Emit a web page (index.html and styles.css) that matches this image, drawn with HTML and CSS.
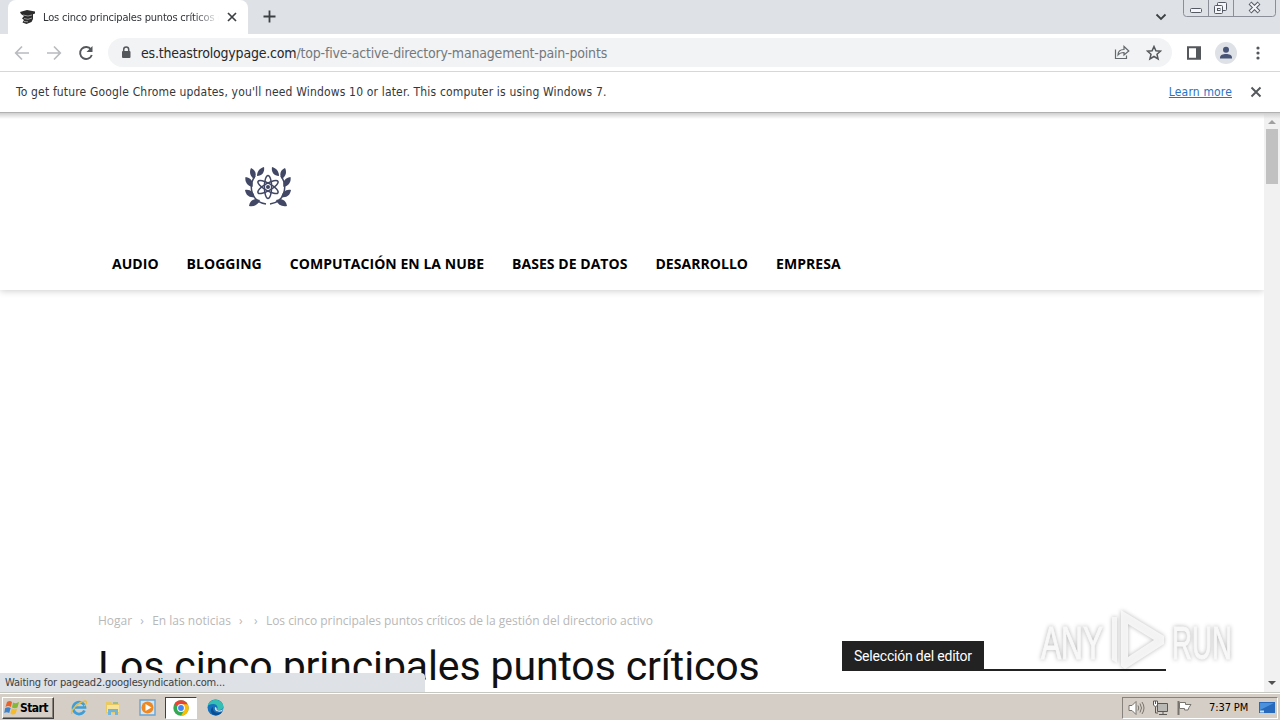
FILE: index.html
```html
<!DOCTYPE html>
<html lang="es">
<head>
    <meta charset="UTF-8">
    <title>Los cinco principales puntos críticos de la gestión del directorio activo</title>
    <link rel="stylesheet" href="styles.css">
</head>
<body>
    <div class="desktop">
        <!-- Tab strip -->
        <div class="tab-strip">
            <div class="tab">
                <svg class="favicon" width="16" height="16" viewBox="0 0 16 16"><path d="M0 3 7 1l8 1.500v2l-2 .8V10l-1.500 3-5 2-4-1.500L4 11 2 9.500 4 7 1 5z" fill="#2c2c2c"/><path d="m3 6 5 1 4-1M4 9.500l4 .8 4-1.300M4 12.500l4 .3" stroke="#999" fill="none"/></svg>
                <span class="tab-title">Los cinco principales puntos críticos de</span>
                <svg class="tab-close" width="10" height="10" viewBox="0 0 10 10"><path d="m1 1 8 8m0-8L1 9" stroke="#3c4043" stroke-width="1.7"/></svg>
            </div>
            <svg class="new-tab" width="13" height="13" viewBox="0 0 13 13"><path d="M6.500.5v12M.5 6.500h12" stroke="#3c4043" stroke-width="1.800"/></svg>
            <svg class="tab-search" width="12" height="8" viewBox="0 0 12 8"><path d="m1.500 1.500 4.500 4.500 4.500-4.500" fill="none" stroke="#3c4043" stroke-width="1.800"/></svg>
            <svg class="window-buttons" width="94" height="18" viewBox="0 0 94 18">
                <path d="M.5 0v13.500q0 3 3 3h86q3 0 3-3V0M25.500 0v16M50.500 0v16" fill="none" stroke="#8b8e96"/>
                <g fill="#f4f6f9" stroke="#555962"><rect x="7.500" y="8.500" width="11" height="4" rx="1"/><rect x="34.500" y="2.500" width="9" height="8" rx="1"/><rect x="31.500" y="5.500" width="8" height="8" rx="1"/><rect x="34.500" y="8.500" width="2.500" height="2"/></g>
                <path d="m67 3 9 9m0-9-9 9" stroke="#555962" stroke-width="4"/><path d="m67.500 3.500 8 8m0-8-8 8" stroke="#f4f6f9" stroke-width="2"/>
            </svg>
        </div>

        <!-- Toolbar -->
        <div class="toolbar">
            <svg class="nav-icon" width="16" height="16" viewBox="0 0 16 16"><path d="M15 8H2m6-6.500L1.700 8 8 14.500" fill="none" stroke="#b9bbbe" stroke-width="1.700"/></svg>
            <svg class="nav-icon" width="16" height="16" viewBox="0 0 16 16"><path d="M1 8h13M8 1.500 14.300 8 8 14.500" fill="none" stroke="#b9bbbe" stroke-width="1.700"/></svg>
            <svg class="nav-icon" width="16" height="16" viewBox="0 0 16 16"><path d="M13 4.500A6 6 0 1 0 13.800 10" fill="none" stroke="#54575b" stroke-width="1.900"/><path d="M14.500 1v6H8.500z" fill="#54575b"/></svg>
            <div class="omnibox">
                <svg width="10" height="13" viewBox="0 0 10 13"><rect x="1" y="5" width="8.500" height="7" rx="1" fill="#54575b"/><path d="M2.700 6V3.500a2.500 2.500 0 0 1 5 0V6" fill="none" stroke="#54575b" stroke-width="1.500"/></svg>
                <span class="url"><span class="url-host">es.theastrologypage.com</span>/top-five-active-directory-management-pain-points</span>
                <svg class="share" width="16" height="15" viewBox="0 0 16 15"><path d="M1.500 4.500v9h11v-3M4 10c0-4 2.500-5.500 6-5.500V1.500L14.800 6 10 10V7.500C7 7.500 5.500 8 4 10z" fill="none" stroke="#65686d" stroke-width="1.200"/></svg>
                <svg class="star" width="16" height="16" viewBox="0 0 16 16"><path d="m8 1.500 1.900 4.300 4.600.4L11 9.300l1.100 4.700L8 11.500 3.900 14 5 9.300 1.500 6.200l4.600-.4z" fill="none" stroke="#54575b" stroke-width="1.500"/></svg>
            </div>
            <svg class="side-panel" width="14" height="14" viewBox="0 0 14 14"><path d="M1 1.200h12v11.600H1z" fill="#fff" stroke="#54575b" stroke-width="2"/><path d="M9 1h4v12H9z" fill="#54575b"/></svg>
            <svg class="avatar" width="22" height="22" viewBox="0 0 22 22"><circle cx="11" cy="11" r="11" fill="#dee1e6"/><circle cx="11" cy="7.800" r="3" fill="#465477"/><path d="M5 16.500v-1c0-2.500 3-3.500 6-3.500s6 1 6 3.500v1z" fill="#465477"/></svg>
            <svg class="menu-dots" width="4" height="14" viewBox="0 0 4 14"><g fill="#54575b"><circle cx="2" cy="2" r="1.600"/><circle cx="2" cy="7" r="1.600"/><circle cx="2" cy="12" r="1.600"/></g></svg>
        </div>

        <div class="infobar">
            <span class="info-text">To get future Google Chrome updates, you'll need Windows 10 or later. This computer is using Windows 7.</span>
            <a class="learn-more">Learn more</a>
            <svg width="12" height="12" viewBox="0 0 12 12"><path d="m1.500 1.500 9 9m0-9-9 9" stroke="#54575b" stroke-width="1.900"/></svg>
        </div>

        <!-- Page -->
        <div class="viewport">
            <div class="page">
                <header class="site-header">
                    <svg class="site-logo" width="48" height="44" viewBox="0 0 48 44">
                        <g fill="none" stroke="#414765" stroke-width="1.500">
                            <path d="M11 11C4 21 7 37 22 39M37 11c7 10 4 26-11 28"/>
                            <ellipse cx="24" cy="22" rx="3.600" ry="11.500"/>
                            <ellipse cx="24" cy="22" rx="3.600" ry="11.500" transform="rotate(60 24 22)"/>
                            <ellipse cx="24" cy="22" rx="3.600" ry="11.500" transform="rotate(120 24 22)"/>
                        </g>
                        <circle cx="24" cy="22" r="2" fill="#414765"/>
                        <g id="leaves" fill="#414765">
                            <path d="M20 2c1 5-2 9-7 9 0-5 3-8 7-9z"/>
                            <path d="M7 3c5 2 6 7 3 11-4-3-5-7-3-11z"/>
                            <path d="M1.500 12c6 1 8 5 7 10-5-1-8-5-7-10z"/>
                            <path d="M1 25c5-1 9 2 9.500 7C5 33 2 30 1 25z"/>
                            <path d="M5 41c1-6 5-8 11-6-2 5-6 7-11 6z"/>
                        </g>
                        <use href="#leaves" transform="matrix(-1 0 0 1 48 0)"/>
                    </svg>
                    <nav class="site-menu">
                        <a>AUDIO</a>
                        <a>BLOGGING</a>
                        <a>COMPUTACIÓN EN LA NUBE</a>
                        <a>BASES DE DATOS</a>
                        <a>DESARROLLO</a>
                        <a>EMPRESA</a>
                    </nav>
                </header>
                <div class="content">
                    <main class="article">
                        <div class="breadcrumbs">
                            <span>Hogar</span><i>›</i><span>En las noticias</span><i>›</i><i>›</i><span>Los cinco principales puntos críticos de la gestión del directorio activo</span>
                        </div>
                        <h1>Los cinco principales puntos críticos</h1>
                    </main>
                    <aside class="sidebar">
                        <h4><span>Selección del editor</span></h4>
                    </aside>
                </div>
            </div>
            <div class="scrollbar">
                <svg width="8" height="5" viewBox="0 0 8 5"><path d="m0 5 4-4 4 4z" fill="#a0a0a0"/></svg>
                <div class="thumb"></div>
                <svg class="arrow-down" width="8" height="5" viewBox="0 0 8 5"><path d="m0 0 4 4 4-4z" fill="#505050"/></svg>
            </div>
            <div class="status-bubble">Waiting for pagead2.googlesyndication.com...</div>
            <svg class="watermark" width="200" height="70" viewBox="0 0 200 70">
                <g class="wm-text">
                    <text x="4" y="52" textLength="62" lengthAdjust="spacingAndGlyphs">ANY</text>
                    <text x="135" y="52" textLength="60" lengthAdjust="spacingAndGlyphs">RUN</text>
                </g>
                <path class="wm-mark" d="M75 10h5v46l-5-3z"/>
                <path class="wm-mark" fill-rule="evenodd" d="M84 3l43 26v8L88 62l-4-3zM91 17v33l26-17z"/>
            </svg>
        </div>

        <!-- Taskbar -->
        <div class="taskbar">
            <div class="start">
                <svg width="16" height="16" viewBox="0 0 16 16"><path d="M3 2q3-2 5 0L7 7Q4 5 1.500 7z" fill="#e8632b"/><path d="M9 2.500q3 1.500 6-.5l-1.500 5.500q-3 1.500-5.500 0z" fill="#84b837"/><path d="M1.200 8q3-1.500 5.500 0l-1.500 5q-2.500-1.500-5 0z" fill="#3d83cb"/><path d="M7.700 8.500q3 1.500 5.500 0l-1.500 5q-3 2-5.300 0z" fill="#f5bb2a"/></svg>
                <span>Start</span>
            </div>
            <div class="task"><svg width="18" height="18" viewBox="0 0 18 18"><path d="M14.500 11.500A6 6 0 1 1 15 8.500H5" fill="none" stroke="#3b9fdb" stroke-width="2.700"/><path d="M2 15C0 12 8 3 15 2c3 0 1 4-1 5" fill="none" stroke="#edbd3b" stroke-width="1.300"/></svg></div>
            <div class="task"><svg width="16" height="16" viewBox="0 0 16 16"><path d="M1 2h5l1 2h7v9H1z" fill="#e8c962"/><path d="M2 5h12v7H2z" fill="#f7e49a"/><path d="M3 15V9h10v6h-3v-3H6v3z" fill="#71b5dc"/><path d="M8 3h5" stroke="#65a85b"/></svg></div>
            <div class="task"><svg width="17" height="17" viewBox="0 0 17 17"><path d="M1 1h15v15H1z" fill="#d2e7f6" stroke="#6ba3cf" stroke-width="1.400"/><circle cx="8.500" cy="8.500" r="6" fill="#f08822"/><path d="m6.500 5 6 3.500-6 3.500z" fill="#fff"/></svg></div>
            <div class="task active"><svg width="16" height="16" viewBox="0 0 16 16"><circle cx="8" cy="8" r="7.700" fill="#34a853"/><path d="M8 8 1.300 4.200A7.700 7.700 0 0 1 14.700 4.200z" fill="#ea4335"/><path d="M8 4.200h6.700A7.700 7.700 0 0 1 8 15.700L11.300 10z" fill="#fbbc05"/><circle cx="8" cy="8" r="3.900" fill="#fff"/><circle cx="8" cy="8" r="2.900" fill="#4285f4"/></svg></div>
            <div class="task"><svg width="17" height="17" viewBox="0 0 17 17"><circle cx="8.500" cy="8.500" r="8" fill="#1672bd"/><path d="M.7 7C2-1.500 15-1.500 16.400 7c.5 3-3.500 5-6.500 3.500 2-3-1-6-4-5.500C3 5 1.500 6 .7 7z" fill="#35bfb2"/><path d="M6 8c-1 5 4 7 9 5-2 3-6 4-8 3-4-2-4-6-1-8z" fill="#0c4d91"/><path d="M8 8c1 0 2 1 1.700 2.600 1 1.400 4 1.400 6.300-.6l-1 2.300c-4 1-8 0-7-4.300z" fill="#d6e6ee"/></svg></div>
            <div class="tray">
                <svg width="17" height="16" viewBox="0 0 17 16"><path d="M1 5.500h3l4-4v13l-4-4H1z" fill="#fff" stroke="#77736d"/><path d="M10 5.500q1.500 2.500 0 5m2-7q3 4.500 0 9m2-10.500q4 6 0 12" fill="none" stroke="#77736d"/></svg>
                <svg width="17" height="16" viewBox="0 0 17 16"><path d="M5.500 3.500h10v8h-10z" fill="#b9b8b5" stroke="#5a5855"/><path d="M7 14.500h8M11 12v2M3.500 7v6H6" fill="none" stroke="#5a5855"/><path d="M1.500 1v4l2 2 2-2V1zM3.500 1v3" fill="#fff" stroke="#5a5855"/></svg>
                <svg width="17" height="16" viewBox="0 0 17 16"><path d="M2.500 1v14" stroke="#77736d" stroke-width="2"/><path d="M3.500 2.500h6v2h5.500l-2 3 -1 2.500H8.500V8.500h-5z" fill="#fff" stroke="#77736d"/></svg>
                <span class="clock">7:37 PM</span>
                <svg width="16" height="14" viewBox="0 0 16 14"><path d="M0 1h16v11H0z" fill="#2769bc"/><path d="M1 2h14L1 9z" fill="#4b91dc"/><path d="M1 10.500h4" stroke="#c5e2f5" stroke-width="2"/></svg>
            </div>
        </div>
    </div>
</body>
</html>
```

FILE: styles.css
```css
* {
    box-sizing: border-box;
}

body {
    margin: 0;
    background: #fff;
    font-family: "DejaVu Sans Condensed", "DejaVu Sans", sans-serif;
    overflow: hidden;
}

svg {
    display: block;
    flex: none;
}

.desktop {
    display: flex;
    flex-direction: column;
    width: 1280px;
    height: 720px;
}

/* Browser */
.tab-strip {
    display: flex;
    height: 34px;
    padding-left: 8px;
    background: #dee1e6;
}

.tab {
    display: flex;
    align-items: center;
    width: 240px;
    padding: 0 11px 0 12px;
    background: #fff;
    border-radius: 8px 8px 0 0;
}

.tab-title {
    flex: 1;
    margin: 0 8px 0 7px;
    overflow: hidden;
    white-space: nowrap;
    font-size: 11px;
    letter-spacing: -0.19px;
    color: #303338;
    -webkit-mask-image: linear-gradient(90deg, #000 86%, transparent);
    mask-image: linear-gradient(90deg, #000 86%, transparent);
}

.new-tab {
    margin: 10px 0 0 15px;
}

.tab-search {
    margin: 13px 16px 0 auto;
}

.window-buttons {
    margin-right: 3px;
}

.toolbar {
    display: flex;
    align-items: center;
    height: 38px;
    padding-left: 14px;
    border-bottom: 1px solid #d5d7da;
}

.nav-icon {
    margin-right: 16px;
}

.omnibox {
    display: flex;
    align-items: center;
    width: 1064px;
    height: 29px;
    margin-left: -2px;
    padding: 0 10px 0 13px;
    border-radius: 15px;
    background: #f1f3f4;
}

.url {
    margin-left: 10px;
    font-size: 14px;
    letter-spacing: -0.19px;
    color: #74787d;
    white-space: nowrap;
}

.url-host {
    color: #25282c;
}

.share {
    margin-left: auto;
}

.star {
    margin-left: 16px;
}

.side-panel {
    margin-left: 15px;
}

.avatar {
    margin-left: 14px;
}

.menu-dots {
    margin-left: 19px;
}

.infobar {
    display: flex;
    align-items: center;
    height: 41px;
    padding: 0 18px 0 16px;
    border-bottom: 1px solid #b1b1b1;
    font-size: 12px;
    letter-spacing: 0.165px;
    color: #34373b;
}

.learn-more {
    margin: 0 18px 0 auto;
    color: #2873c4;
    text-decoration: underline;
}

/* Page */
.viewport {
    position: relative;
    display: flex;
    height: 579px;
    overflow: hidden;
}

.page {
    width: 1264px;
    background: linear-gradient(#cfcfcf, #fff 6px);
}

.site-header {
    height: 177px;
    padding: 52px 98px 0;
    box-shadow: 0 1px 7px rgba(0, 0, 0, 0.2);
    clip-path: inset(0 0 -10px 0);
}

.site-logo {
    margin-left: 146px;
}

.site-menu {
    display: flex;
    margin-top: 31px;
    font: bold 14px/48px "Open Sans", sans-serif;
    letter-spacing: 0.04px;
    color: #000;
}

.site-menu a {
    padding: 0 14px;
    white-space: nowrap;
}

.content {
    display: flex;
    padding: 323px 98px 0;
}

.article {
    width: 744px;
}

.breadcrumbs {
    display: flex;
    font: 12px/16px "Open Sans", sans-serif;
    color: #b8b8b8;
    white-space: nowrap;
}

.breadcrumbs i {
    width: 5px;
    margin: 0 7px 0 8px;
    font-style: normal;
}

.breadcrumbs i + i {
    margin-left: 3px;
}

.breadcrumbs span:last-child {
    letter-spacing: -0.02px;
}

.article h1 {
    margin: 12px 0 0;
    font: 400 41px/50px Roboto, sans-serif;
    letter-spacing: -0.12px;
    color: #111;
    white-space: nowrap;
}

.sidebar {
    width: 324px;
    padding-top: 28px;
}

.sidebar h4 {
    display: flex;
    height: 30px;
    margin: 0;
    border-bottom: 2px solid #222;
    font: 400 14px/30px Roboto, sans-serif;
    letter-spacing: -0.2px;
    color: #fff;
}

.sidebar h4 span {
    height: 30px;
    padding: 0 12px;
    background: #222;
}

.scrollbar {
    display: flex;
    flex-direction: column;
    align-items: center;
    width: 16px;
    padding: 6px 0;
    background: linear-gradient(#cfcfcf, #f1f1f1 6px);
}

.thumb {
    width: 12px;
    height: 55px;
    margin-top: 5px;
    background: #c1c1c1;
}

.arrow-down {
    margin-top: auto;
}

.status-bubble {
    position: absolute;
    left: 0;
    bottom: 0;
    width: 425px;
    height: 19px;
    padding-left: 5px;
    border-radius: 0 4px 0 0;
    background: #dee1e6;
    font-size: 11px;
    line-height: 20px;
    letter-spacing: -0.17px;
    color: #3c4043;
}

.watermark {
    position: absolute;
    right: 43px;
    bottom: 15px;
    filter: drop-shadow(0 0 2px rgba(0, 0, 0, 0.3));
}

.wm-text {
    font: 47px "Liberation Sans", sans-serif;
    fill: #f8f8f8;
    stroke: #f8f8f8;
    stroke-width: 1px;
}

.wm-mark {
    fill: #f8f8f8;
    fill-opacity: 0.9;
}

/* Taskbar */
.taskbar {
    display: flex;
    align-items: center;
    height: 28px;
    padding: 2px 2px 0;
    border-top: 1px solid #c5c8c1;
    background: #d5cec6;
    box-shadow: inset 0 1px #fff;
}

.start {
    display: flex;
    align-items: center;
    width: 52px;
    height: 22px;
    margin-right: 8px;
    padding-left: 1px;
    border: 1px solid;
    border-color: #fff #404040 #404040 #fff;
    box-shadow: inset -1px -1px #87827c;
    font-size: 12px;
    font-weight: bold;
    letter-spacing: -0.55px;
}

.task {
    display: flex;
    align-items: center;
    justify-content: center;
    width: 34px;
    height: 22px;
}

.task.active {
    width: 32px;
    margin: 0 1px;
    border: 1px solid;
    border-color: #404040 #fff #fff #404040;
    background: #fff;
}

.tray {
    display: flex;
    align-items: center;
    gap: 7px;
    width: 156px;
    height: 22px;
    margin-left: auto;
    padding-left: 5px;
    border: 1px solid;
    border-color: #87827c #fff #fff #87827c;
}

.clock {
    margin: 0 4px 0 9px;
    font-size: 11px;
    letter-spacing: -0.1px;
    white-space: nowrap;
}
```
